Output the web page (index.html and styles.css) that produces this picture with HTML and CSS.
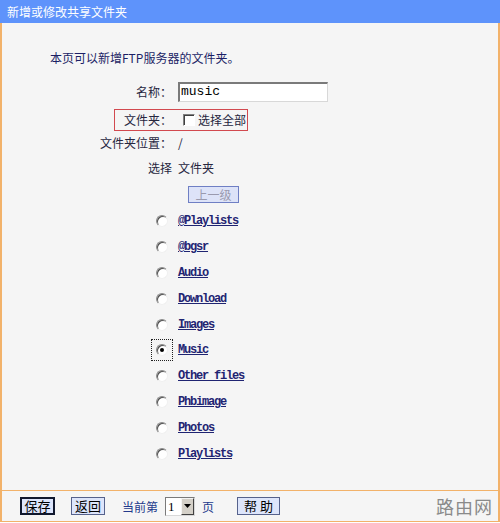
FILE: index.html
```html
<!DOCTYPE html>
<html lang="zh-CN">
<head>
<meta charset="utf-8">
<title>新增或修改共享文件夹</title>
<link rel="stylesheet" href="styles.css">
</head>
<body>
<div class="win">
  <div class="titlebar">新增或修改共享文件夹</div>
  <div class="main">
    <div class="intro">本页可以新增FTP服务器的文件夹。</div>
    <div class="row row-name">
      <span class="label">名称：</span>
      <span class="textbox">music</span>
    </div>
    <div class="row row-folder">
      <div class="redbox">
        <span class="label2">文件夹：</span>
        <span class="check"></span>
        <span class="checktext">选择全部</span>
      </div>
    </div>
    <div class="row row-loc">
      <span class="label">文件夹位置：</span>
      <span class="value">/</span>
    </div>
    <div class="row row-sel">
      <span class="label">选择</span>
      <span class="value">文件夹</span>
    </div>
    <div class="upbtn">上一级</div>
    <div class="list">
      <div class="item"><span class="rwrap"><span class="radio"></span></span><a class="link" href="#">@Playlists</a></div>
      <div class="item"><span class="rwrap"><span class="radio"></span></span><a class="link" href="#">@bgsr</a></div>
      <div class="item"><span class="rwrap"><span class="radio"></span></span><a class="link" href="#">Audio</a></div>
      <div class="item"><span class="rwrap"><span class="radio"></span></span><a class="link" href="#">Download</a></div>
      <div class="item"><span class="rwrap"><span class="radio"></span></span><a class="link" href="#">Images</a></div>
      <div class="item"><span class="rwrap focus"><span class="radio checked"></span></span><a class="link" href="#">Music</a></div>
      <div class="item"><span class="rwrap"><span class="radio"></span></span><a class="link" href="#">Other files</a></div>
      <div class="item"><span class="rwrap"><span class="radio"></span></span><a class="link" href="#">Phbimage</a></div>
      <div class="item"><span class="rwrap"><span class="radio"></span></span><a class="link" href="#">Photos</a></div>
      <div class="item"><span class="rwrap"><span class="radio"></span></span><a class="link" href="#">Playlists</a></div>
    </div>
  </div>
  <div class="footer">
    <span class="btn btn-save">保存</span>
    <span class="btn btn-back">返回</span>
    <span class="pagetext">当前第</span>
    <span class="select"><span class="selval">1</span><span class="selarrow"><svg width="7" height="4" viewBox="0 0 7 4"><path d="M0 0H7L3.5 4Z" fill="#000"/></svg></span></span>
    <span class="pagetext page">页</span>
    <span class="btn btn-help">帮 助</span>
    <span class="watermark">路由网</span>
  </div>
</div>
</body>
</html>
```
FILE: styles.css
```css
html, body {
  margin: 0;
  padding: 0;
  background: #ffffff;
}
body {
  font-family: "Noto Sans CJK SC", "DejaVu Sans", sans-serif;
  font-size: 12px;
  color: #26263e;
}
.win {
  width: 500px;
}
.titlebar {
  height: 23px;
  line-height: 23px;
  background: #5e93fb;
  color: #ffffff;
  padding-left: 7px;
  font-size: 12px;
}
.main {
  height: 467px;
  box-sizing: border-box;
  border-left: 2px solid #f2b26a;
  border-right: 2px solid #f2b26a;
  background: #f5f5f5;
  display: flex;
  flex-direction: column;
  align-items: flex-start;
}
.intro {
  margin-top: 27px;
  margin-left: 48px;
  line-height: 16px;
  color: #1c1f66;
}
.row {
  display: flex;
  align-items: center;
}
.label {
  width: 170px;
  text-align: right;
  line-height: 16px;
}
.value {
  margin-left: 6px;
  line-height: 16px;
}
.row-name {
  margin-top: 16px;
  height: 20px;
}
.textbox {
  margin-left: 6px;
  width: 150px;
  height: 20px;
  box-sizing: border-box;
  background: #ffffff;
  border-style: solid;
  border-width: 2px 1px 1px 2px;
  border-color: #7a7a7a #d8d8d8 #d8d8d8 #7a7a7a;
  font-family: "Liberation Mono", monospace;
  font-size: 13px;
  line-height: 16px;
  padding-left: 1px;
  color: #000;
}
.row-folder {
  margin-top: 7px;
}
.redbox {
  margin-left: 112px;
  height: 22px;
  box-sizing: border-box;
  border: 1px solid #d2494f;
  display: flex;
  align-items: center;
  padding-left: 9px;
  padding-right: 1px;
}
.label2 {
  line-height: 16px;
}
.check {
  margin-left: 11px;
  width: 12px;
  height: 12px;
  box-sizing: border-box;
  background: #ffffff;
  border-style: solid;
  border-width: 1px;
  border-color: #808080 #ffffff #ffffff #808080;
  box-shadow: inset 1px 1px 0 #404040;
}
.checktext {
  margin-left: 3px;
  line-height: 16px;
}
.row-loc {
  margin-top: 4px;
}
.row-sel {
  margin-top: 9px;
}
.upbtn {
  margin-top: 10px;
  margin-left: 186px;
  width: 51px;
  height: 17px;
  box-sizing: border-box;
  border: 1px solid #6f7fc4;
  background: #dde3f8;
  color: #9a9aae;
  text-align: center;
  line-height: 15px;
  font-size: 12px;
}
.list {
  margin-top: 5px;
  display: flex;
  flex-direction: column;
}
.item {
  height: 25.9px;
  display: flex;
  align-items: center;
}
.rwrap {
  margin-left: 149px;
  width: 22px;
  height: 22px;
  box-sizing: border-box;
  display: flex;
  align-items: center;
  justify-content: center;
}
.rwrap.focus {
  border: 1px dotted #202020;
}
.radio {
  width: 12px;
  height: 12px;
  box-sizing: border-box;
  border-radius: 50%;
  background: #ffffff;
  border-style: solid;
  border-width: 1px;
  border-color: #8a8a8a #f0f0f0 #f0f0f0 #8a8a8a;
  box-shadow: inset 1px 1px 0 #505050;
  display: flex;
  align-items: center;
  justify-content: center;
}
.radio.checked::after {
  content: "";
  width: 4px;
  height: 4px;
  border-radius: 50%;
  background: #000;
}
.link {
  margin-left: 5px;
  font-family: "Liberation Mono", monospace;
  font-size: 12px;
  font-weight: bold;
  letter-spacing: -1.2px;
  color: #1f2472;
  text-decoration: underline;
  line-height: 14px;
}
.footer {
  height: 30px;
  border: 1px solid #f2b26a;
  border-width: 1px 2px 1px 2px;
  background: #f5f5f5;
  display: flex;
  align-items: center;
  padding-left: 18px;
  padding-right: 5px;
}
.btn {
  height: 18px;
  box-sizing: border-box;
  background: #dde5fb;
  border: 1px solid #56628c;
  color: #000;
  font-size: 13px;
  line-height: 16px;
  text-align: center;
}
.btn-save {
  width: 35px;
  border: 2px solid #10182e;
  line-height: 14px;
}
.btn-back {
  width: 34px;
  margin-left: 16px;
}
.pagetext {
  margin-left: 17px;
  color: #233a8c;
  font-size: 12px;
}
.page {
  margin-left: 7px;
}
.select {
  margin-left: 7px;
  width: 30px;
  height: 19px;
  box-sizing: border-box;
  border-style: solid;
  border-width: 1px;
  border-color: #7a7a7a #d8d8d8 #d8d8d8 #7a7a7a;
  background: #ffffff;
  display: flex;
  align-items: stretch;
}
.selval {
  flex: 1;
  font-family: "Liberation Serif", serif;
  font-size: 13px;
  line-height: 17px;
  padding-left: 2px;
  color: #000;
}
.selarrow {
  width: 13px;
  background: #d4d0c8;
  border-style: solid;
  border-width: 1px;
  border-color: #f4f4f4 #404040 #404040 #f4f4f4;
  box-sizing: border-box;
  display: flex;
  align-items: center;
  justify-content: center;
}
.btn-help {
  width: 43px;
  margin-left: 23px;
}
.watermark {
  margin-left: auto;
  font-size: 18px;
  color: #8a8a8a;
  line-height: 20px;
  letter-spacing: 1px;
}
```
